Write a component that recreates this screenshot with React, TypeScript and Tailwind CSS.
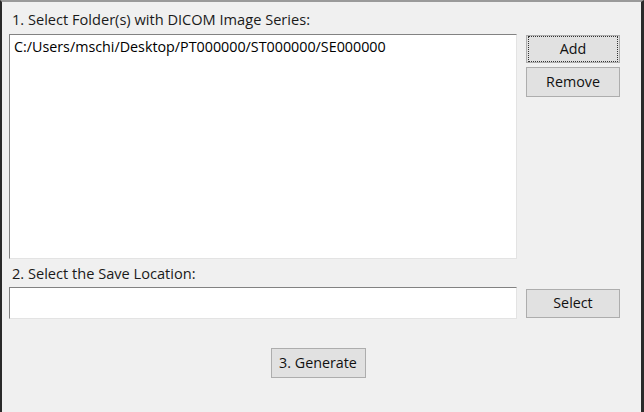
import React from "react";

const font = { fontFamily: '"Open Sans", "Noto Sans", "Liberation Sans", sans-serif' };

function Btn({ children, focus, className }: { children: React.ReactNode; focus?: boolean; className?: string }) {
  return (
    <div className={"border border-[#adadad] bg-[#e1e1e1] flex items-center justify-center text-[14.3px] leading-[18px] text-[#111] " + (className || "")}>
      {focus ? (
        <div className="w-full h-full border border-dotted border-[#333] m-[1px] flex items-center justify-center">{children}</div>
      ) : (
        children
      )}
    </div>
  );
}

export default function App() {
  return (
    <div className="w-[644px] h-[412px] bg-[#f0f0f0] border-l-2 border-r-[3px] border-t-2 border-l-[#2a2a2a] border-r-[#2a2a2a] border-t-[#9a9a9a] flex flex-col" style={font}>
      <div className="pl-[10px] pt-[8px] text-[14.6px] leading-[18px] text-[#1a1a1a]">1. Select Folder(s) with DICOM Image Series:</div>
      <div className="flex pl-[7px] mt-[6px]">
        <div className="w-[508px] h-[225px] bg-white border-t border-l border-[#828282] border-r border-r-[#e3e3e3] border-b border-b-[#e3e3e3] pl-[4px] pt-[3px] text-[14.3px] leading-[18px] text-black">
          C:/Users/mschi/Desktop/PT000000/ST000000/SE000000
        </div>
        <div className="flex flex-col ml-[9px] gap-[4px] mt-[1px]">
          <Btn focus className="w-[94px] h-[28px]">Add</Btn>
          <Btn className="w-[94px] h-[30px]">Remove</Btn>
        </div>
      </div>
      <div className="pl-[10px] mt-[5px] text-[14.6px] leading-[18px] text-[#1a1a1a]">2. Select the Save Location:</div>
      <div className="flex pl-[7px] mt-[5px] items-center">
        <div className="w-[508px] h-[32px] bg-white border-t border-l border-[#828282] border-r border-r-[#e3e3e3] border-b border-b-[#e3e3e3]"></div>
        <Btn className="w-[94px] h-[29px] ml-[9px]">Select</Btn>
      </div>
      <div className="flex justify-center mt-[29px] pr-[7px]">
        <Btn className="w-[95px] h-[30px]">3. Generate</Btn>
      </div>
    </div>
  );
}
